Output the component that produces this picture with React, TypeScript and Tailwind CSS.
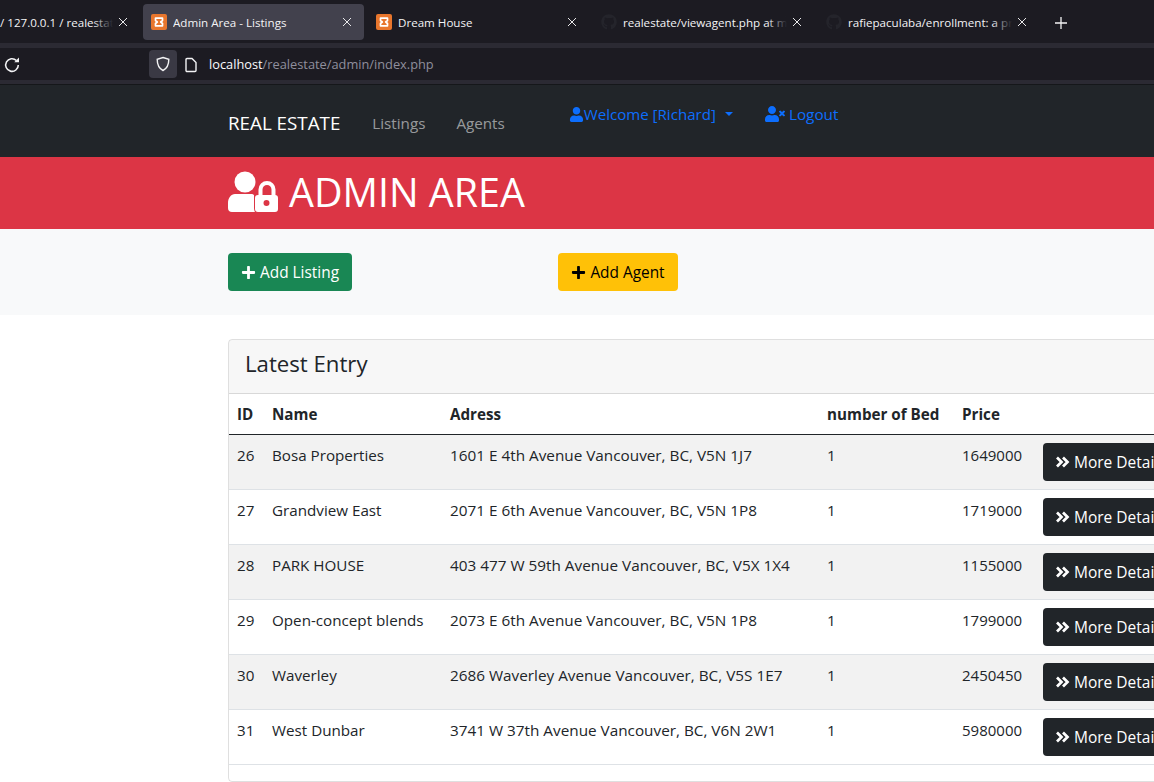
import { FaUser, FaUserTimes, FaPlus, FaGithub } from 'react-icons/fa';

const listings = [
  { id: 26, name: 'Bosa Properties', address: '1601 E 4th Avenue Vancouver, BC, V5N 1J7', beds: 1, price: 1649000 },
  { id: 27, name: 'Grandview East', address: '2071 E 6th Avenue Vancouver, BC, V5N 1P8', beds: 1, price: 1719000 },
  { id: 28, name: 'PARK HOUSE', address: '403 477 W 59th Avenue Vancouver, BC, V5X 1X4', beds: 1, price: 1155000 },
  { id: 29, name: 'Open-concept blends', address: '2073 E 6th Avenue Vancouver, BC, V5N 1P8', beds: 1, price: 1799000 },
  { id: 30, name: 'Waverley', address: '2686 Waverley Avenue Vancouver, BC, V5S 1E7', beds: 1, price: 2450450 },
  { id: 31, name: 'West Dunbar', address: '3741 W 37th Avenue Vancouver, BC, V6N 2W1', beds: 1, price: 5980000 },
];

function XamppIcon() {
  return (
    <svg width="16" height="16" viewBox="0 0 16 16" className="shrink-0">
      <rect width="16" height="16" rx="2" fill="#e8762d" />
      <path d="M4.500 4.200h7v2.300L9.700 8l1.800 1.500v2.300h-7V9.500L6.300 8 4.500 6.500z" fill="none" stroke="#fff" strokeWidth="1.700" strokeLinejoin="round" />
    </svg>
  );
}

function CloseIcon() {
  return (
    <svg width="10" height="10" viewBox="0 0 10 10" className="shrink-0">
      <path d="M1 1l8 8M9 1l-8 8" stroke="#e8e8ea" strokeWidth="1" />
    </svg>
  );
}

function Tab({ label, width, active, fade, github, cut }: { label: string; width: string; active?: boolean; fade?: boolean; github?: boolean; cut?: boolean }) {
  return (
    <div className={`flex items-center h-[36px] rounded-[4px] shrink-0 ${width} ${active ? 'bg-[#42414d]' : ''}`}>
      {!cut && <div className="ml-[8px] mr-[6px] flex">{github ? <FaGithub className="text-[#24242b] text-[16px]" /> : <XamppIcon />}</div>}
      <div className="relative flex-1 overflow-hidden whitespace-nowrap text-[11.600px] leading-[18px] pt-[1px] text-[#f3f3f5]">
        {label}
        {fade && <div className="absolute right-0 top-0 bottom-0 w-[20px] bg-gradient-to-r from-transparent to-[#1c1b22]" />}
      </div>
      <div className="ml-[5px] mr-[12px] flex"><CloseIcon /></div>
    </div>
  );
}

function BrowserChrome() {
  return (
    <div className="bg-[#1c1b22]">
      <div className="h-[43px] flex items-start pt-[4px]">
        <div className="w-[143px] shrink-0 overflow-hidden">
          <Tab label="/ 127.0.0.1 / realestate" width="w-[140px]" fade cut />
        </div>
        <Tab label="Admin Area - Listings" width="w-[221px]" active />
        <div className="flex gap-[4px] ml-[4px]">
          <Tab label="Dream House" width="w-[221px]" />
          <Tab label="realestate/viewagent.php at main" width="w-[221px]" fade github />
          <Tab label="rafiepaculaba/enrollment: a private" width="w-[221px]" fade github />
        </div>
        <svg width="14" height="14" viewBox="0 0 14 14" className="ml-[15px] mt-[12px]">
          <path d="M7 1v12M1 7h12" stroke="#f3f3f5" strokeWidth="1.300" />
        </svg>
      </div>
      <div className="h-[5px] bg-[#2b2a33]" />
      <div className="h-[32px] flex items-center">
        <svg width="18" height="18" viewBox="0 0 16 16" className="ml-[3px] mr-[128px] mt-[1px] shrink-0">
          <path d="M13.600 8a5.600 5.600 0 1 1-1.700-4" fill="none" stroke="#f3f3f5" strokeWidth="1.400" />
          <path d="M14.200 1.400v4.200H10z" fill="#f3f3f5" />
        </svg>
        <div className="w-[28px] h-[28px] rounded-[4px] bg-[#3a3944] flex items-center justify-center shrink-0">
          <svg width="16" height="16" viewBox="0 0 16 16">
            <path d="M8 1.500l5.800 1.800c0 5-1.300 9-5.800 11.200C3.500 12.300 2.200 8.300 2.200 3.300z" fill="none" stroke="#f3f3f5" strokeWidth="1.400" />
          </svg>
        </div>
        <svg width="14" height="16" viewBox="0 0 14 16" className="ml-[7px] mt-[1px] shrink-0">
          <path d="M2 2.500a1 1 0 0 1 1-1h5l4 4v8a1 1 0 0 1-1 1H3a1 1 0 0 1-1-1z" fill="#1c1b22" stroke="#f3f3f5" strokeWidth="1.400" />
        </svg>
        <div className="ml-[11px] mt-[1px] text-[12.800px] text-[#fbfbfe]">
          localhost<span className="text-[#8f8f9d]">/realestate/admin/index.php</span>
        </div>
      </div>
      <div className="h-[4px] bg-[#2b2a33]" />
    </div>
  );
}

function AdminIcon() {
  return (
    <svg width="50" height="41" viewBox="0 0 50 41" fill="#fff" className="shrink-0 mb-[3px]">
      <circle cx="17" cy="11" r="10.500" />
      <path d="M7 23h16c1.500 0 2.500.5 3 1v13c0 1.500.5 3 1 4H4c-2.500 0-4-1.500-4-4v-5c0-5 3-9 7-9z" />
      <path d="M32.500 25v-6.500a6.500 6.500 0 0 1 13 0V25" fill="none" stroke="#fff" strokeWidth="4" />
      <path fillRule="evenodd" d="M30 24h17a3 3 0 0 1 3 3v11a3 3 0 0 1-3 3H30a3 3 0 0 1-3-3V27a3 3 0 0 1 3-3zm8.500 5a3 3 0 1 0 0 6 3 3 0 0 0 0-6z" />
    </svg>
  );
}

function DoubleChevron() {
  return (
    <svg width="15" height="12" viewBox="0 0 15 12" className="shrink-0">
      <path d="M2 1.500L6.500 6 2 10.500M8 1.500L12.500 6 8 10.500" fill="none" stroke="#fff" strokeWidth="2.700" />
    </svg>
  );
}

export default function App() {
  return (
    <div className="w-[1154px] h-[782px] overflow-hidden bg-white text-[#212529] font-['Open_Sans','Noto_Sans',sans-serif]">
      <BrowserChrome />

      {/* Navbar */}
      <nav className="h-[73px] bg-[#212529] pl-[228px] flex items-start border-t border-[#15171a]">
        <span className="mt-[23px] text-[18.800px] leading-[30px] text-white">REAL ESTATE</span>
        <span className="mt-[26px] ml-[32px] text-[15.200px] leading-[24px] text-[#ffffff8c]">Listings</span>
        <span className="mt-[26px] ml-[31px] text-[15.200px] leading-[24px] text-[#ffffff8c]">Agents</span>
        <div className="mt-[17px] ml-[64px] flex items-center text-[15.100px] leading-[24px] text-[#0d6efd]">
          <FaUser className="text-[15px]" />
          <span>Welcome [Richard]</span>
          <span className="ml-[9px] w-0 h-0 border-x-[4.500px] border-x-transparent border-t-[4.500px] border-t-[#0d6efd]" />
        </div>
        <div className="mt-[17px] ml-[32px] flex items-center text-[15.300px] leading-[24px] text-[#0d6efd]">
          <FaUserTimes className="text-[20px] mr-[4px]" />
          <span>Logout</span>
        </div>
      </nav>

      {/* Page title */}
      <header className="h-[72px] bg-[#dc3545] pl-[228px] flex items-center text-white">
        <AdminIcon />
        <h1 className="ml-[11px] mb-[2px] text-[39.400px] leading-[48px]">ADMIN AREA</h1>
      </header>

      {/* Actions */}
      <section className="h-[86px] bg-[#f8f9fa] pl-[228px] pt-[24px] flex items-start">
        <button className="w-[124px] h-[38px] rounded-[4px] bg-[#198754] text-white text-[15.400px] flex items-center justify-center gap-[4px]">
          <FaPlus className="text-[15px]" />
          <span className="mt-[2px]">Add Listing</span>
        </button>
        <button className="ml-[206px] w-[120px] h-[38px] rounded-[4px] bg-[#ffc107] text-black text-[15.400px] flex items-center justify-center gap-[4px]">
          <FaPlus className="text-[15px]" />
          <span className="mt-[2px]">Add Agent</span>
        </button>
      </section>

      {/* Latest entries */}
      <div className="mt-[24px] ml-[228px] w-[1000px] h-[443px] border border-[#00000020] rounded-[4px] overflow-hidden">
        <div className="h-[54px] bg-[#00000008] border-b border-[#00000020] pl-[16px] pb-[5px] flex items-center text-[22.200px]">
          Latest Entry
        </div>
        <table className="w-full table-fixed border-collapse text-[15.200px]">
          <colgroup>
            <col className="w-[35px]" />
            <col className="w-[178px]" />
            <col className="w-[377px]" />
            <col className="w-[135px]" />
            <col className="w-[81px]" />
            <col />
          </colgroup>
          <thead>
            <tr className="h-[40px] border-b border-[#212529] text-left">
              <th className="px-[8px] pt-[2px] font-bold">ID</th>
              <th className="px-[8px] pt-[2px] font-bold">Name</th>
              <th className="px-[8px] pt-[2px] font-bold">Adress</th>
              <th className="px-[8px] pt-[2px] font-bold whitespace-nowrap">number of Bed</th>
              <th className="px-[8px] pt-[2px] font-bold">Price</th>
              <th />
            </tr>
          </thead>
          <tbody>
            {listings.map((item, i) => (
              <tr key={item.id} className={`h-[55px] border-b border-[#dee2e6] align-top ${i % 2 === 0 ? 'bg-[#f2f2f2]' : ''}`}>
                <td className="px-[8px] pt-[8px] leading-[24px]">{item.id}</td>
                <td className="px-[8px] pt-[8px] leading-[24px] whitespace-nowrap">{item.name}</td>
                <td className="px-[8px] pt-[8px] leading-[24px] whitespace-nowrap text-[15.300px]">{item.address}</td>
                <td className="px-[8px] pt-[8px] leading-[24px]">{item.beds}</td>
                <td className="px-[8px] pt-[8px] leading-[24px] text-[15px]">{item.price}</td>
                <td className="px-[8px] pt-[8px]">
                  <button className="h-[38px] w-[140px] rounded-[4px] bg-[#212529] text-white text-[15.500px] flex items-center pl-[12px] gap-[4px]">
                    <DoubleChevron />
                    <span className="mt-[2px]">More Details</span>
                  </button>
                </td>
              </tr>
            ))}
          </tbody>
        </table>
      </div>
    </div>
  );
}
